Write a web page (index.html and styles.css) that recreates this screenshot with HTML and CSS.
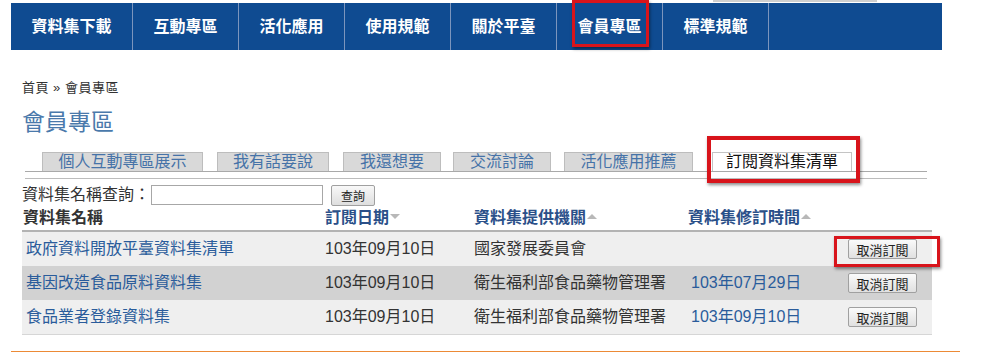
FILE: index.html
```html
<!DOCTYPE html>
<html lang="zh-Hant">
<head>
<meta charset="utf-8">
<title>會員專區</title>
<link rel="stylesheet" href="styles.css">
</head>
<body>
<div class="page">
  <div class="topstrip"><div class="topbar"></div></div>
  <nav class="nav">
    <a class="nav-item first">資料集下載</a>
    <a class="nav-item">互動專區</a>
    <a class="nav-item">活化應用</a>
    <a class="nav-item">使用規範</a>
    <a class="nav-item">關於平臺</a>
    <a class="nav-item marked">會員專區<span class="mark nav-mark"></span></a>
    <a class="nav-item">標準規範</a>
  </nav>
  <div class="content">
    <div class="crumb">首頁 » 會員專區</div>
    <h1 class="title">會員專區</h1>
    <div class="tabbar">
      <div class="tabs">
        <a class="tab t1">個人互動專區展示</a>
        <a class="tab t2">我有話要說</a>
        <a class="tab t3">我還想要</a>
        <a class="tab t4">交流討論</a>
        <a class="tab t5">活化應用推薦</a>
        <a class="tab active">訂閱資料集清單<span class="mark tab-mark"></span></a>
      </div>
    </div>
    <div class="tabline"></div>
    <div class="search">
      <span class="search-label">資料集名稱查詢：</span>
      <input class="search-input" type="text">
      <button class="search-btn">查詢</button>
    </div>
    <div class="table">
      <div class="row head">
        <div class="cell c1">資料集名稱</div>
        <div class="cell c2 sort">訂閱日期<span class="tri down"></span></div>
        <div class="cell c3 sort">資料集提供機關<span class="tri up"></span></div>
        <div class="cell c4 sort">資料集修訂時間<span class="tri up"></span></div>
        <div class="cell c5"></div>
      </div>
      <div class="row odd">
        <div class="cell c1"><a class="link">政府資料開放平臺資料集清單</a></div>
        <div class="cell c2">103年09月10日</div>
        <div class="cell c3">國家發展委員會</div>
        <div class="cell c4"></div>
        <div class="cell c5"><button class="cancel">取消訂閱</button><span class="mark btn-mark"></span></div>
      </div>
      <div class="row even">
        <div class="cell c1"><a class="link">基因改造食品原料資料集</a></div>
        <div class="cell c2">103年09月10日</div>
        <div class="cell c3">衛生福利部食品藥物管理署</div>
        <div class="cell c4"><a class="link">103年07月29日</a></div>
        <div class="cell c5"><button class="cancel">取消訂閱</button></div>
      </div>
      <div class="row odd last">
        <div class="cell c1"><a class="link">食品業者登錄資料集</a></div>
        <div class="cell c2">103年09月10日</div>
        <div class="cell c3">衛生福利部食品藥物管理署</div>
        <div class="cell c4"><a class="link">103年09月10日</a></div>
        <div class="cell c5"><button class="cancel">取消訂閱</button></div>
      </div>
    </div>
  </div>
  <div class="footline"></div>
</div>
</body>
</html>
```

FILE: styles.css
```css
* { box-sizing: border-box; }
html, body { margin: 0; padding: 0; background: #ffffff; }
body {
  font-family: "Liberation Sans", "Noto Sans CJK TC", sans-serif;
  color: #333333;
  font-size: 16px;
}
.page { padding-left: 11px; width: 982px; }

.topstrip { height: 3px; }
.topbar { margin-left: 702px; width: 164px; height: 2px; background: #cfcfcf; }

.nav {
  display: flex;
  width: 931px;
  height: 47px;
  background: #0f4b91;
}
.nav-item {
  position: relative;
  display: block;
  flex: 0 0 106px;
  height: 47px;
  line-height: 47px;
  text-align: center;
  color: #ffffff;
  font-weight: bold;
  font-size: 16px;
  border-right: 1px solid #7c95bd;
  white-space: nowrap;
}
.nav-item.first { flex-basis: 122px; }
.mark {
  position: absolute;
  border: 3px solid #d8141b;
  box-shadow: 1px 2px 3px rgba(0, 0, 0, 0.45);
  pointer-events: none;
}
.nav-mark { left: 15px; top: -3px; width: 77px; height: 47px; }

.content { padding-left: 11px; }
.crumb {
  margin-top: 29px;
  height: 18px;
  line-height: 18px;
  font-size: 13px;
  color: #333333;
  letter-spacing: 0.5px;
}
.title {
  margin: 11px 0 0 0;
  height: 28px;
  line-height: 28px;
  font-size: 23px;
  font-weight: normal;
  color: #4a79ab;
}

.tabbar {
  margin-top: 16px;
  margin-left: 3px;
  width: 902px;
  border-bottom: 1px solid #a9a9a9;
  padding-left: 17px;
}
.tabs { display: flex; height: 19px; }
.tab {
  position: relative;
  display: block;
  height: 19px;
  line-height: 18px;
  text-align: center;
  background: #d9d9d9;
  border: 1px solid #bdbdbd;
  border-bottom: none;
  color: #4673a8;
  font-size: 16px;
  white-space: nowrap;
}
.t1 { width: 161px; }
.t2 { width: 112px; margin-left: 14px; }
.t3 { width: 98px; margin-left: 14px; }
.t4 { width: 98px; margin-left: 12px; }
.t5 { width: 129px; margin-left: 13px; }
.tab.active {
  width: 140px;
  margin-left: 19px;
  background: #ffffff;
  color: #111111;
  border-color: #c4c4c4;
}
.tab-mark { left: -6px; top: -17px; width: 153px; height: 47px; border-width: 4px; }
.tabline {
  margin-top: 6px;
  margin-left: 3px;
  width: 902px;
  border-top: 1px solid #bcbcbc;
}

.search {
  margin-top: 5px;
  height: 22px;
  display: flex;
  align-items: center;
}
.search-label { font-size: 16px; line-height: 22px; color: #333333; }
.search-input {
  margin: 0 0 0 1px;
  width: 172px;
  height: 20px;
  border: 1px solid #a7a7a7;
  padding: 0;
  background: #ffffff;
}
.search-btn {
  margin-left: 8px;
  width: 44px;
  height: 21px;
  padding: 0;
  font-family: "Liberation Sans", "Noto Sans CJK TC", sans-serif;
  font-size: 12px;
  color: #222222;
  border: 1px solid #a0a0a0;
  border-radius: 2px;
  background: linear-gradient(#f8f8f8, #dedede);
}

.table { width: 910px; }
.row {
  display: grid;
  grid-template-columns: 300px 149px 215px 140px 106px;
  height: 34px;
  align-items: center;
}
.row.head {
  height: 26px;
  border-bottom: 2px solid #b3b3b3;
  font-weight: bold;
  color: #333333;
}
.row.odd { background: #efefef; }
.row.even { background: #d2d2d2; }
.row.last { height: 35px; border-bottom: 1px solid #d6d6d6; }
.cell {
  position: relative;
  padding-left: 3px;
  white-space: nowrap;
  font-size: 16px;
  line-height: 22px;
}
.row .c1 { padding-left: 4px; }
.row.head .c1 { padding-left: 1px; }
.sort { color: #2b5089; }
.tri {
  display: inline-block;
  width: 0;
  height: 0;
  margin-left: 1px;
  vertical-align: 4px;
  border-left: 5px solid transparent;
  border-right: 5px solid transparent;
}
.tri.down { border-top: 5px solid #b8b8b8; }
.tri.up { border-bottom: 5px solid #b8b8b8; }
.row .c4 { padding-left: 5px; }
.row.head .c4 { padding-left: 2px; }
.link { color: #2a5c9b; text-decoration: none; }
.c5 { padding-left: 22px; height: 100%; display: flex; align-items: center; }
.cancel {
  width: 69px;
  height: 20px;
  padding: 0;
  font-family: "Liberation Sans", "Noto Sans CJK TC", sans-serif;
  font-size: 13px;
  color: #222222;
  border: 1px solid #a0a0a0;
  border-radius: 2px;
  background: linear-gradient(#fafafa, #e0e0e0);
}
.btn-mark { left: 8px; top: 4px; width: 106px; height: 31px; }

.footline {
  margin-top: 16px;
  width: 949px;
  height: 1px;
  background: #ec8a36;
}
```
